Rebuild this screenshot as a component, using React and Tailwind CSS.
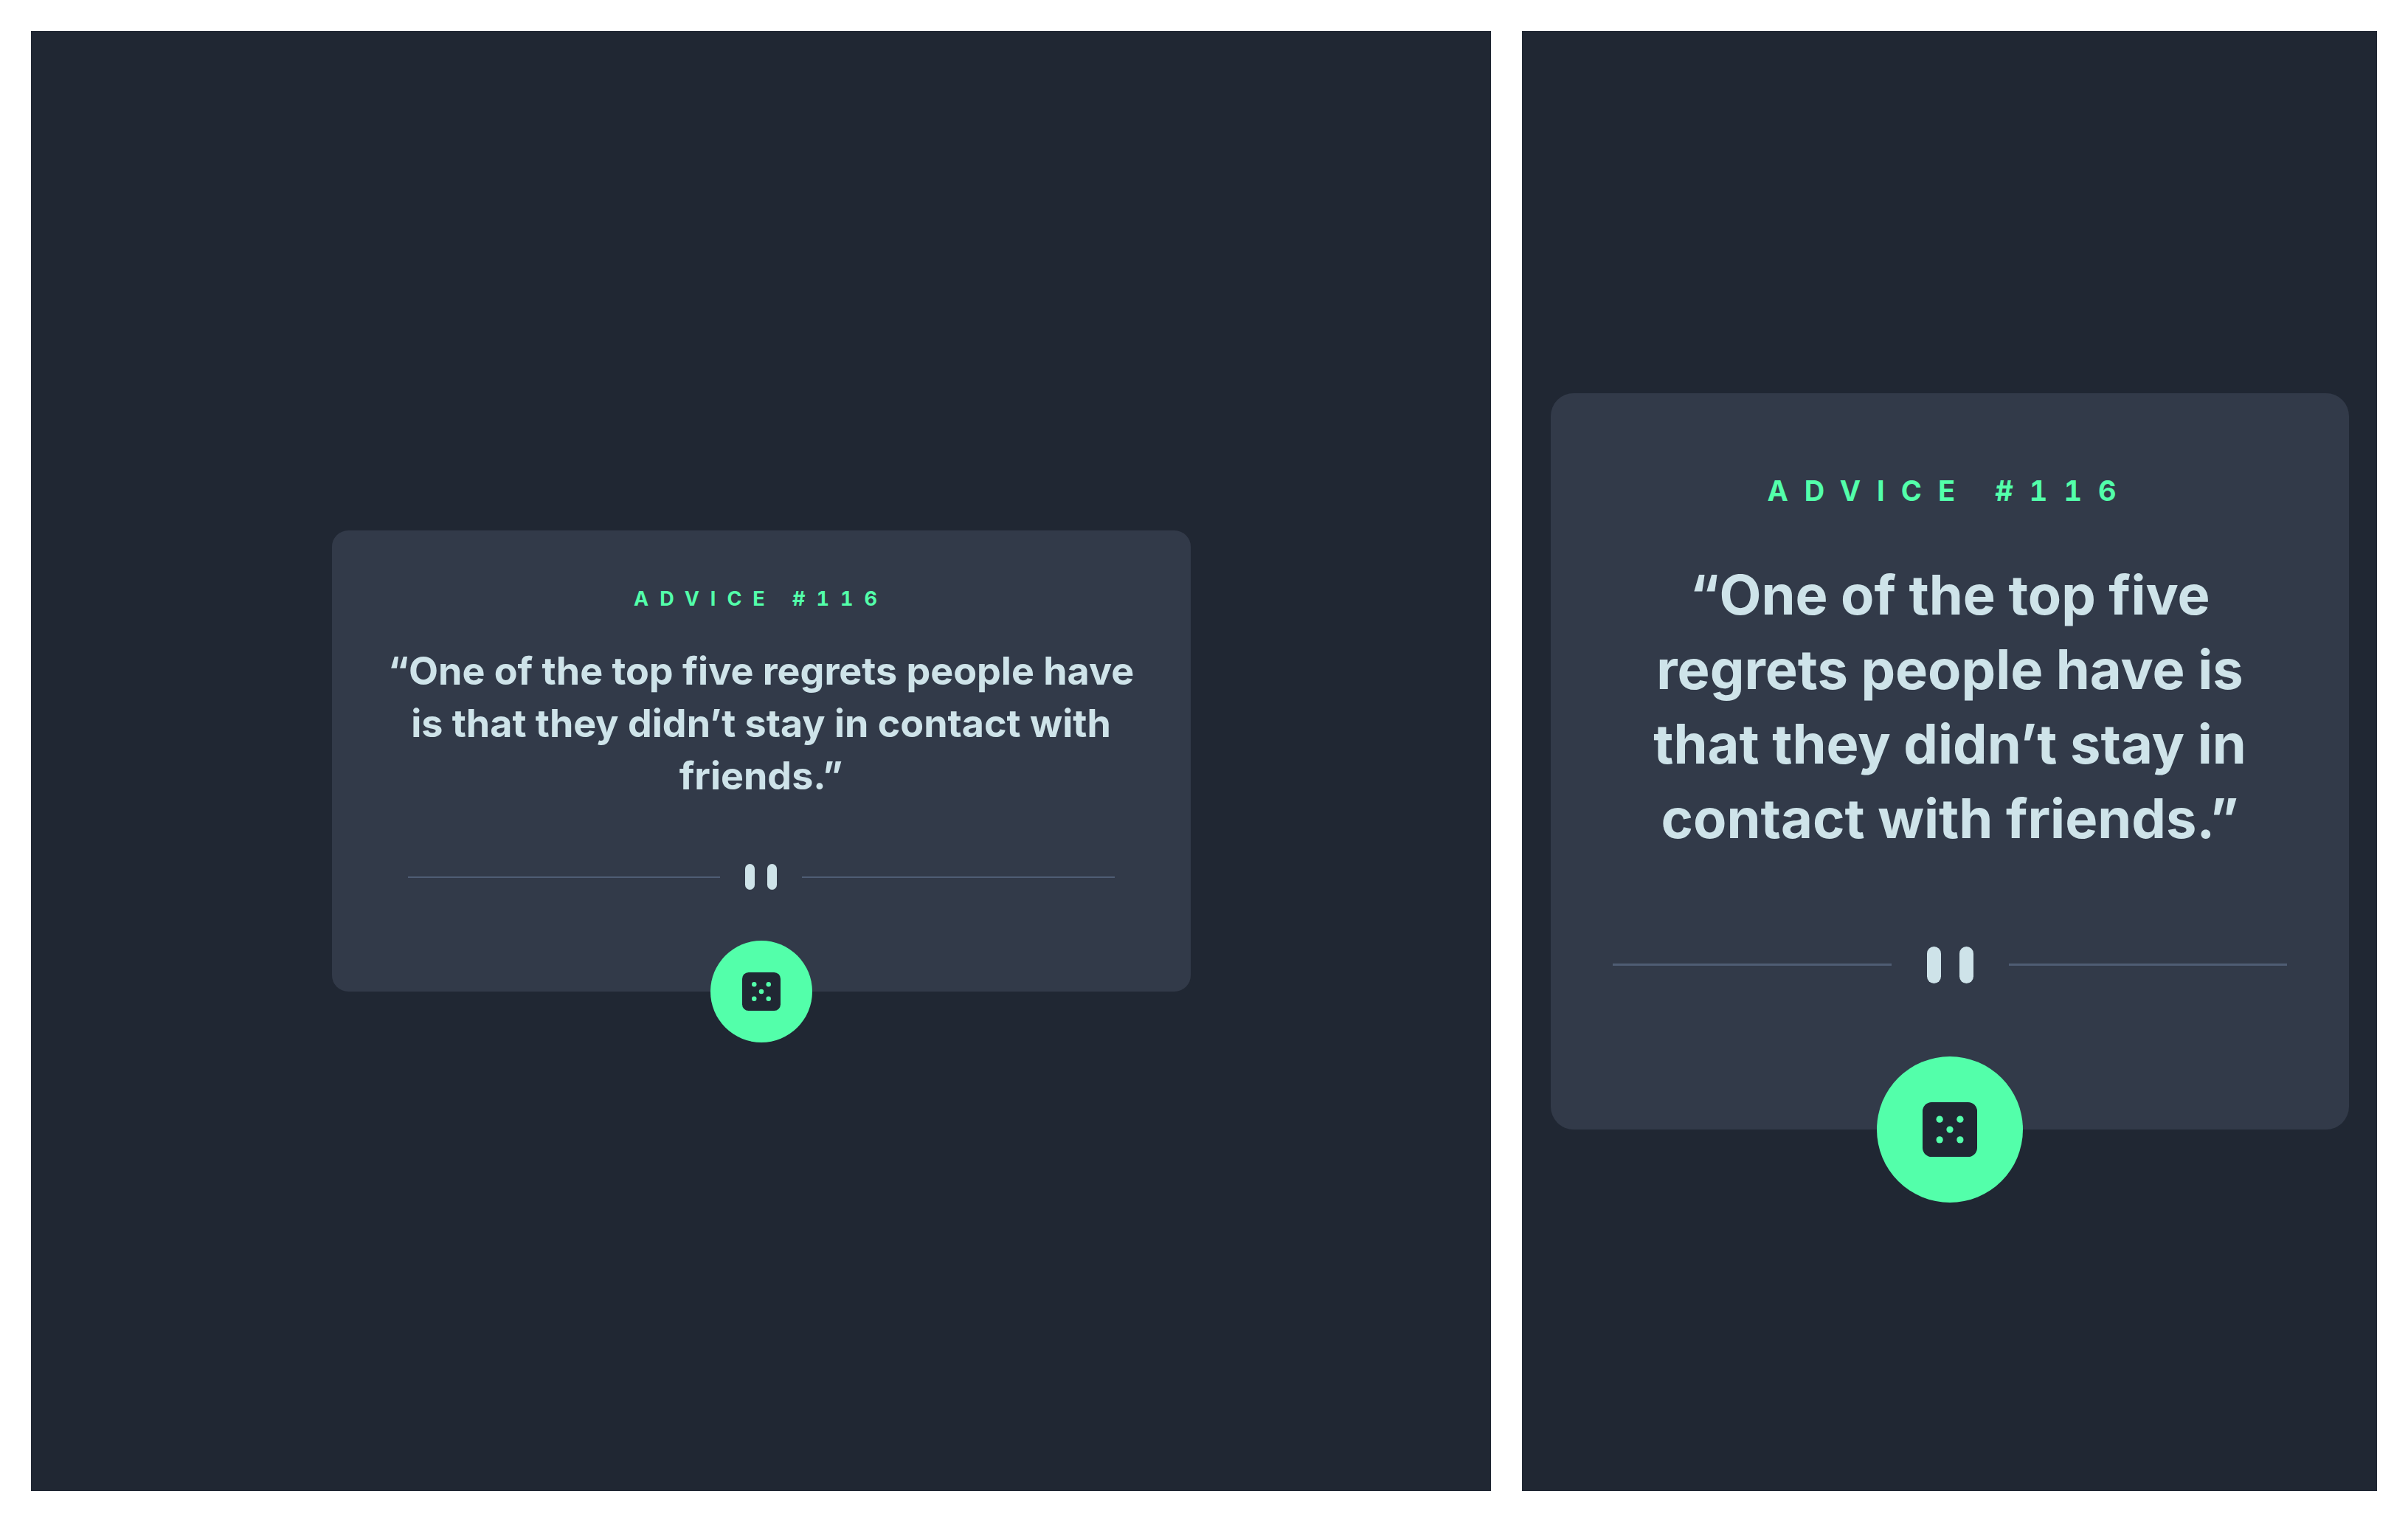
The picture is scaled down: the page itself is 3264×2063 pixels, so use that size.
import clsx from "clsx";

const sizes = {
  wide: {
    card: "max-w-[1164px] rounded-[22px] pt-[74px] pb-[138px]",
    label: "text-[27px] leading-[38px] tracking-[15px]",
    quote: "mt-[43px] px-[74px] text-[52px] leading-[71px]",
    divider: "mt-[84px] px-[103px] gap-[34px]",
    line: "h-[2px]",
    bars: "gap-[17px]",
    bar: "h-[35px] w-[13px]",
    button: "size-[138px]",
    icon: "size-[52px]",
  },
  narrow: {
    card: "mr-[38px] ml-[39px] rounded-[31px] pt-[107px] pb-[198px]",
    label: "text-[38px] leading-[50px] tracking-[22px]",
    quote: "mt-[66px] px-[107px] text-[74px] leading-[101px]",
    divider: "mt-[123px] px-[84px] gap-[48px]",
    line: "h-[3px]",
    bars: "gap-[25px]",
    bar: "h-[50px] w-[19px]",
    button: "size-[198px]",
    icon: "size-[74px]",
  },
};

function DiceIcon({ className }) {
  return (
    <svg viewBox="0 0 24 24" className={className} aria-hidden="true">
      <rect width="24" height="24" rx="4" fill="#202733" />
      <g fill="#53ffaa">
        <circle cx="7.5" cy="7.5" r="1.5" />
        <circle cx="16.5" cy="7.5" r="1.5" />
        <circle cx="12" cy="12" r="1.5" />
        <circle cx="7.5" cy="16.5" r="1.5" />
        <circle cx="16.5" cy="16.5" r="1.5" />
      </g>
    </svg>
  );
}

function AdviceCard({ size, id, advice }) {
  const s = sizes[size];
  return (
    <article className={clsx("relative w-full bg-[#323a49] text-center", s.card)}>
      <h1 className={clsx("font-bold text-[#53ffaa] tabular-nums", s.label)}>{`ADVICE #${id}`}</h1>
      <blockquote className={clsx("font-bold text-[#cee3e9]", s.quote)}>{`“${advice}”`}</blockquote>
      <div className={clsx("flex items-center", s.divider)} aria-hidden="true">
        <span className={clsx("flex-1 bg-[#4f5d74]", s.line)} />
        <span className={clsx("flex", s.bars)}>
          <span className={clsx("rounded-full bg-[#cee3e9]", s.bar)} />
          <span className={clsx("rounded-full bg-[#cee3e9]", s.bar)} />
        </span>
        <span className={clsx("flex-1 bg-[#4f5d74]", s.line)} />
      </div>
      <button
        type="button"
        aria-label="Get new advice"
        className={clsx(
          "absolute bottom-0 left-1/2 flex -translate-x-1/2 translate-y-1/2 items-center justify-center rounded-full bg-[#53ffaa]",
          s.button
        )}
      >
        <DiceIcon className={s.icon} />
      </button>
    </article>
  );
}

export default function App() {
  const advice = "One of the top five regrets people have is that they didn’t stay in contact with friends.";
  return (
    <main className="grid min-h-screen grid-cols-[1979fr_1159fr] gap-[42px] bg-white p-[42px] font-['Inter',sans-serif]">
      <section className="flex items-center justify-center bg-[#202733]">
        <AdviceCard size="wide" id={116} advice={advice} />
      </section>
      <section className="flex items-center justify-center bg-[#202733]">
        <AdviceCard size="narrow" id={116} advice={advice} />
      </section>
    </main>
  );
}
